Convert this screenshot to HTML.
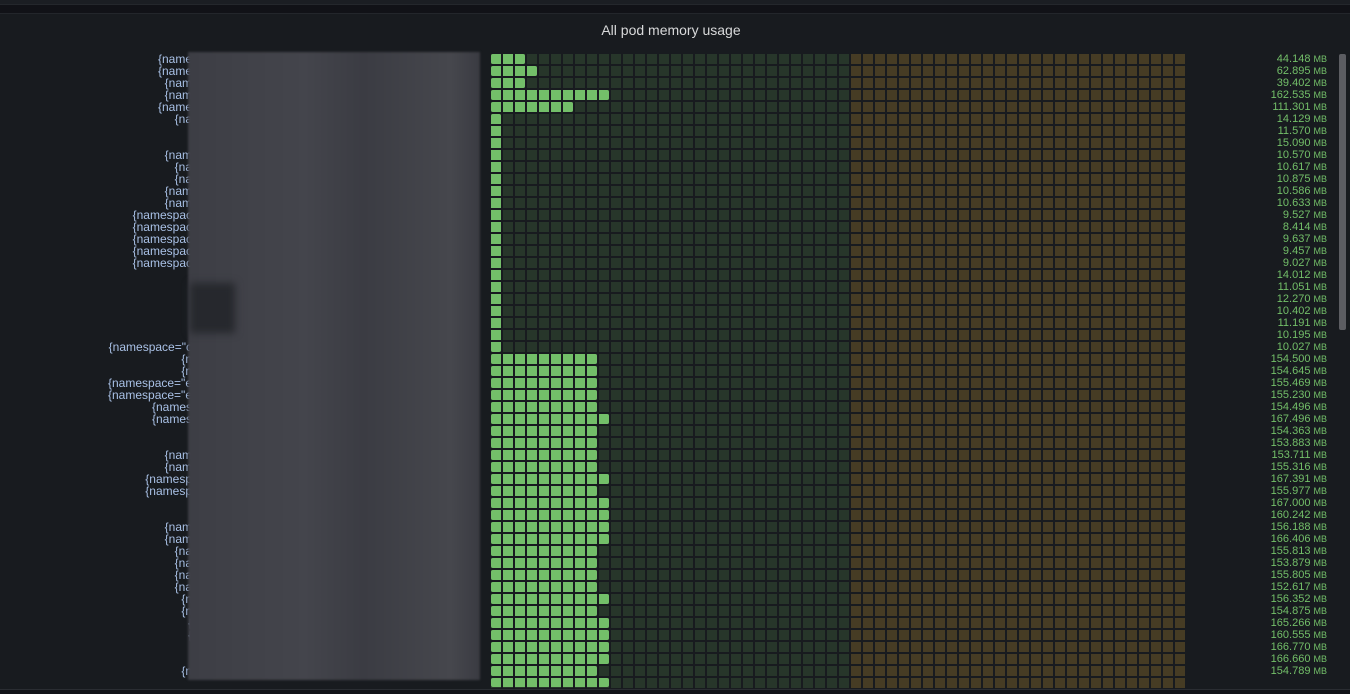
<!DOCTYPE html>
<html><head><meta charset="utf-8"><style>
body{margin:0;width:1350px;height:694px;background:#111217;overflow:hidden;position:relative;font-family:"Liberation Sans",sans-serif}
.top{position:absolute;left:0;top:0;width:1350px;height:4px;background:#1b1e23;border-bottom:1px solid #24272c}
.panel{position:absolute;left:0;top:13px;width:1350px;height:675px;background:#181b1f;border-top:1px solid #23262b;border-bottom:1px solid #2a2d32}
.title{position:absolute;top:22px;left:0;width:1342px;text-align:center;color:#d8d9da;font-size:14px;font-weight:500}
.grid{position:absolute;left:491px;top:54px;height:634px;width:696px;overflow:hidden;
background:repeating-linear-gradient(180deg,transparent 0 10px,#181b1f 10px 12px),repeating-linear-gradient(90deg,transparent 0 10px,#181b1f 10px 12px),linear-gradient(90deg,#27362a 0 360px,#463c24 360px)}
.g{position:absolute;left:491px;height:10px;background:repeating-linear-gradient(90deg,#73bf69 0 10px,transparent 10px 12px);border-radius:2px}
.vals{position:absolute;left:1200px;top:53px;width:127px;text-align:right;color:#73bf69;font-size:11px;line-height:12px}
.vals small{font-size:9px}
.labs{position:absolute;left:0;top:53px;width:192px;text-align:right;color:#a9c1e6;font-size:12px;line-height:12px;white-space:pre}
.blur{position:absolute;left:188px;top:52px;width:292px;height:628px;background:linear-gradient(90deg,#3d3e45,#44454c 40%,#3b3c43 60%,#46474d 90%,#3a3b42);filter:blur(1px)}
.dark{position:absolute;left:190px;top:283px;width:45px;height:50px;background:#26282d;filter:blur(4px)}
.sb{position:absolute;left:1339px;top:54px;width:7px;height:276px;background:#5c5d62;border-radius:2px}
</style></head><body>
<div class="top"></div>
<div class="panel"></div>
<div class="title">All pod memory usage</div>
<div class="labs">{name
{name
{nam
{nam
{name
{na


{nam
{na
{na
{nam
{nam
{namespac
{namespac
{namespac
{namespac
{namespac






{namespace="c
{n
{n
{namespace="e
{namespace="e
{names
{names


{nam
{nam
{namesp
{namesp


{nam
{nam
{na
{na
{na
{na
{n
{n
{
{


{n</div>
<div class="blur"></div>
<div class="dark"></div>
<div class="grid"></div>
<div class="g" style="top:54px;width:34px"></div>
<div class="g" style="top:66px;width:46px"></div>
<div class="g" style="top:78px;width:34px"></div>
<div class="g" style="top:90px;width:118px"></div>
<div class="g" style="top:102px;width:82px"></div>
<div class="g" style="top:114px;width:10px;height:238px;background:repeating-linear-gradient(180deg,#73bf69 0 10px,transparent 10px 12px)"></div>
<div class="g" style="top:354px;width:106px"></div>
<div class="g" style="top:366px;width:106px"></div>
<div class="g" style="top:378px;width:106px"></div>
<div class="g" style="top:390px;width:106px"></div>
<div class="g" style="top:402px;width:106px"></div>
<div class="g" style="top:414px;width:118px"></div>
<div class="g" style="top:426px;width:106px"></div>
<div class="g" style="top:438px;width:106px"></div>
<div class="g" style="top:450px;width:106px"></div>
<div class="g" style="top:462px;width:106px"></div>
<div class="g" style="top:474px;width:118px"></div>
<div class="g" style="top:486px;width:106px"></div>
<div class="g" style="top:498px;width:118px"></div>
<div class="g" style="top:510px;width:118px"></div>
<div class="g" style="top:522px;width:118px"></div>
<div class="g" style="top:534px;width:118px"></div>
<div class="g" style="top:546px;width:106px"></div>
<div class="g" style="top:558px;width:106px"></div>
<div class="g" style="top:570px;width:106px"></div>
<div class="g" style="top:582px;width:106px"></div>
<div class="g" style="top:594px;width:118px"></div>
<div class="g" style="top:606px;width:106px"></div>
<div class="g" style="top:618px;width:118px"></div>
<div class="g" style="top:630px;width:118px"></div>
<div class="g" style="top:642px;width:118px"></div>
<div class="g" style="top:654px;width:118px"></div>
<div class="g" style="top:666px;width:106px"></div>
<div class="g" style="top:678px;width:118px;height:9px"></div>
<div class="vals">44.148 <small>MB</small><br>62.895 <small>MB</small><br>39.402 <small>MB</small><br>162.535 <small>MB</small><br>111.301 <small>MB</small><br>14.129 <small>MB</small><br>11.570 <small>MB</small><br>15.090 <small>MB</small><br>10.570 <small>MB</small><br>10.617 <small>MB</small><br>10.875 <small>MB</small><br>10.586 <small>MB</small><br>10.633 <small>MB</small><br>9.527 <small>MB</small><br>8.414 <small>MB</small><br>9.637 <small>MB</small><br>9.457 <small>MB</small><br>9.027 <small>MB</small><br>14.012 <small>MB</small><br>11.051 <small>MB</small><br>12.270 <small>MB</small><br>10.402 <small>MB</small><br>11.191 <small>MB</small><br>10.195 <small>MB</small><br>10.027 <small>MB</small><br>154.500 <small>MB</small><br>154.645 <small>MB</small><br>155.469 <small>MB</small><br>155.230 <small>MB</small><br>154.496 <small>MB</small><br>167.496 <small>MB</small><br>154.363 <small>MB</small><br>153.883 <small>MB</small><br>153.711 <small>MB</small><br>155.316 <small>MB</small><br>167.391 <small>MB</small><br>155.977 <small>MB</small><br>167.000 <small>MB</small><br>160.242 <small>MB</small><br>156.188 <small>MB</small><br>166.406 <small>MB</small><br>155.813 <small>MB</small><br>153.879 <small>MB</small><br>155.805 <small>MB</small><br>152.617 <small>MB</small><br>156.352 <small>MB</small><br>154.875 <small>MB</small><br>165.266 <small>MB</small><br>160.555 <small>MB</small><br>166.770 <small>MB</small><br>166.660 <small>MB</small><br>154.789 <small>MB</small></div>
<div class="sb"></div>
</body></html>
